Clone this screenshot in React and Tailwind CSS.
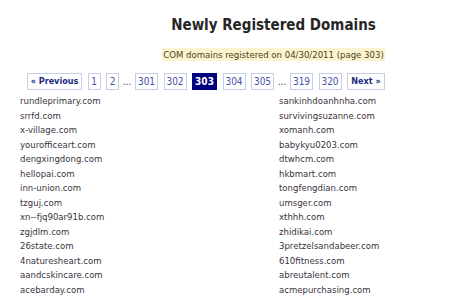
const left = [
  'rundleprimary.com', 'srrfd.com', 'x-village.com', 'yourofficeart.com', 'dengxingdong.com',
  'hellopai.com', 'inn-union.com', 'tzguj.com', 'xn--fjq90ar91b.com', 'zgjdlm.com',
  '26state.com', '4naturesheart.com', 'aandcskincare.com', 'acebarday.com',
];
const right = [
  'sankinhdoanhnha.com', 'survivingsuzanne.com', 'xomanh.com', 'babykyu0203.com', 'dtwhcm.com',
  'hkbmart.com', 'tongfengdian.com', 'umsger.com', 'xthhh.com', 'zhidikai.com',
  '3pretzelsandabeer.com', '610fitness.com', 'abreutalent.com', 'acmepurchasing.com',
];

// fixed box widths taken from the screenshot
const pages = [
  { label: '« Previous', w: 'w-[55px]', bold: true },
  { label: '1', w: 'w-[13px]' },
  { label: '2', w: 'w-[13px]' },
  { gap: true },
  { label: '301', w: 'w-[23px]' },
  { label: '302', w: 'w-[23px]' },
  { label: '303', w: 'w-[25px]', active: true },
  { label: '304', w: 'w-[23px]' },
  { label: '305', w: 'w-[23px]' },
  { gap: true },
  { label: '319', w: 'w-[23px]' },
  { label: '320', w: 'w-[23px]' },
  { label: 'Next »', w: 'w-[38px]', bold: true },
];

export default function App() {
  return (
    <div className="h-[300px] w-[474px] overflow-hidden bg-white pl-[20px] font-['DejaVu_Sans_Condensed','DejaVu_Sans',sans-serif] text-[#333]">
      <div className="w-[507px]">
        <h1 className="pt-[13px] text-center text-[15px] font-bold leading-[24px] text-[#262626]">
          Newly Registered Domains
        </h1>
        <div className="mt-[12px] text-center text-[9.5px] leading-[12px]">
          <span className="bg-[#fcf3cf] px-[1px] py-[1px] text-[#4b4322]">
            COM domains registered on 04/30/2011 (page 303)
          </span>
        </div>
      </div>
      <div className="ml-[7px] mt-[12px] flex items-center gap-[5.5px] text-[10px]">
        {pages.map((p, i) =>
          p.gap ? (
            <span key={i} className="-mx-[2.5px] w-[10px] shrink-0 text-center text-[#444]">
              ...
            </span>
          ) : (
            <span
              key={i}
              className={
                'flex h-[17px] shrink-0 items-center justify-center whitespace-nowrap border ' +
                p.w +
                (p.active
                  ? ' border-[#00007f] bg-[#00007f] font-bold text-white'
                  : p.bold
                    ? ' border-[#c9cee6] bg-white text-[9px] font-bold text-[#1c2a85]'
                    : ' border-[#c9cee6] bg-white text-[#4553a6]')
              }
            >
              {p.label}
            </span>
          )
        )}
      </div>
      <div className="flex text-[9.5px] leading-[14.5px] text-[#3b3340]">
        <ul className="w-[259px] pt-[4px]">
          {left.map((d) => (
            <li key={d}>{d}</li>
          ))}
        </ul>
        <ul className="pt-[4px]">
          {right.map((d) => (
            <li key={d}>{d}</li>
          ))}
        </ul>
      </div>
    </div>
  );
}
